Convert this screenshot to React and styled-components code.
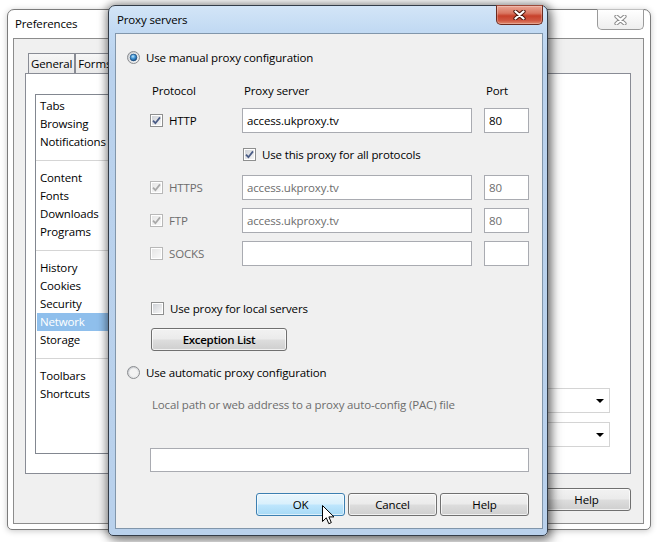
import React from "react";
import styled, { createGlobalStyle, css } from "styled-components";

const GlobalStyle = createGlobalStyle`
  html, body { margin: 0; padding: 0; background: #ffffff; }
  body {
    font-family: "Open Sans", "Noto Sans", "DejaVu Sans", sans-serif;
    font-size: 11.5px;
    letter-spacing: -0.15px;
    color: #000;
  }
  *, *::before, *::after { box-sizing: border-box; }
`;

const Desktop = styled.div`
  position: relative;
  width: 657px;
  height: 542px;
  overflow: hidden;
  background: #ffffff;
`;

/* ---------- background Preferences window ---------- */

const PrefWindow = styled.div`
  position: absolute;
  left: 7px;
  top: 9px;
  width: 644px;
  height: 521px;
  display: flex;
  flex-direction: column;
  padding: 0 6px 6px 5px;
  background: #ffffff;
  border: 1px solid #7b7b7b;
  border-radius: 7px 7px 5px 5px;
  box-shadow: 0 1px 6px rgba(0, 0, 0, 0.22);
`;

const TitleBar = styled.div`
  height: ${(p) => p.$h}px;
  display: flex;
  align-items: flex-start;
  justify-content: space-between;
  flex: none;
`;

const TitleText = styled.span`
  line-height: ${(p) => p.$h}px;
  padding-left: ${(p) => p.$pl}px;
  font-size: 11.5px;
`;

const CaptionClose = styled.div`
  width: 47px;
  height: ${(p) => p.$h}px;
  margin-top: -1px;
  display: flex;
  align-items: center;
  justify-content: center;
  border-radius: 0 0 5px 5px;
  ${(p) =>
    p.$active
      ? css`
          border: 1px solid #6b2a1e;
          border-top-color: #9b4a3a;
          background: linear-gradient(
            to bottom,
            #e9a593 0%,
            #d97661 40%,
            #c7412b 55%,
            #cf5640 80%,
            #e08a6f 100%
          );
          box-shadow: inset 0 0 0 1px rgba(255, 255, 255, 0.25);
        `
      : css`
          border: 1px solid #9a9a9a;
          border-top-color: #c0c0c0;
          background: linear-gradient(to bottom, #ffffff, #eeeeee);
        `}
`;

const PrefBody = styled.div`
  flex: 1;
  display: flex;
  flex-direction: column;
  background: #f0f0f0;
  border: 1px solid #8c8c8c;
  padding: 14px 12px 12px 11px;
`;

const TabStrip = styled.div`
  display: flex;
  height: 20px;
  margin-left: 3px;
`;

const Tab = styled.div`
  height: 20px;
  padding: 0 2px 0 2px;
  line-height: 19px;
  border: 1px solid #898c95;
  border-bottom: none;
  background: linear-gradient(to bottom, #f7f7f7, #e9e9e9);
  white-space: nowrap;
`;

const TabPanel = styled.div`
  height: 401px;
  display: flex;
  background: #ffffff;
  border: 1px solid #898c95;
  padding: 20px 20px 19px 9px;
`;

const ListBox = styled.div`
  width: 150px;
  display: flex;
  flex-direction: column;
  padding-top: 2px;
  background: #ffffff;
  border: 1px solid #828790;
`;

const ListItem = styled.div`
  height: 18px;
  line-height: 18px;
  margin: 0 1px;
  padding-left: 3px;
  ${(p) =>
    p.$selected &&
    css`
      background: #8fbfec;
      color: #ffffff;
    `}
`;

const ListSeparator = styled.div`
  height: 18px;
  display: flex;
  align-items: center;
  &::after {
    content: "";
    flex: 1;
    height: 1px;
    background: #d5d5d5;
  }
`;

const RightPane = styled.div`
  flex: 1;
  display: flex;
  flex-direction: column;
  justify-content: flex-end;
  align-items: flex-end;
  gap: 9px;
  padding-bottom: 7px;
`;

const DropDown = styled.div`
  width: 230px;
  height: 25px;
  display: flex;
  align-items: center;
  justify-content: flex-end;
  padding-right: 5px;
  background: #ffffff;
  border: 1px solid #d4d4d4;
  &::after {
    content: "";
    border-left: 4px solid transparent;
    border-right: 4px solid transparent;
    border-top: 4px solid #000;
  }
`;

const ButtonRow = styled.div`
  display: flex;
  justify-content: ${(p) => (p.$start ? "flex-start" : "flex-end")};
  gap: ${(p) => p.$gap}px;
  margin-top: ${(p) => p.$mt}px;
`;

const Button = styled.div`
  width: ${(p) => p.$w}px;
  height: 23px;
  display: flex;
  align-items: center;
  justify-content: center;
  margin-left: ${(p) => p.$ml || 0}px;
  font-weight: ${(p) => (p.$bold ? 600 : 400)};
  letter-spacing: ${(p) => (p.$bold ? "-0.3px" : "-0.15px")};
  border-radius: 3px;
  ${(p) =>
    p.$hot
      ? css`
          border: 1px solid #3c7fb1;
          background: linear-gradient(
            to bottom,
            #eaf6fd 0%,
            #d9f0fc 48%,
            #bee6fd 52%,
            #a7d9f5 100%
          );
          box-shadow: inset 0 0 0 1px rgba(255, 255, 255, 0.6);
        `
      : css`
          border: 1px solid #707070;
          background: linear-gradient(
            to bottom,
            #f2f2f2 0%,
            #ebebeb 48%,
            #dddddd 52%,
            #cfcfcf 100%
          );
          box-shadow: inset 0 0 0 1px rgba(255, 255, 255, 0.7);
        `}
`;

/* ---------- Proxy servers dialog ---------- */

const Dialog = styled.div`
  position: absolute;
  left: 108px;
  top: 5px;
  width: 440px;
  height: 531px;
  display: flex;
  flex-direction: column;
  padding: 0 4px 6px 6px;
  border: 1px solid #333c48;
  border-radius: 7px 7px 5px 5px;
  background: linear-gradient(
    to bottom,
    #d3e5f7 0px,
    #c2daf3 24px,
    #bad2ed 60px,
    #b9d1ec 100%
  );
  box-shadow: 0 0 9px 2px rgba(0, 0, 0, 0.38), 4px 5px 12px rgba(0, 0, 0, 0.35);
`;

const DialogBody = styled.div`
  flex: 1;
  display: flex;
  flex-direction: column;
  background: #f0f0f0;
  border: 1px solid #8196ab;
  padding: 0 13px 10px 11px;
`;

const OptionRow = styled.label`
  display: flex;
  align-items: center;
  gap: 6px;
  height: 16px;
  margin-top: ${(p) => p.$mt}px;
  margin-left: ${(p) => p.$ml || 0}px;
  color: ${(p) => (p.$disabled ? "#6d6d6d" : "#000")};
  white-space: nowrap;
`;

const TableRow = styled.div`
  display: grid;
  grid-template-columns: 80px 230px 45px;
  column-gap: 12px;
  align-items: center;
  height: ${(p) => p.$h}px;
  margin-top: ${(p) => p.$mt}px;
  margin-left: 23px;
`;

const HeadCell = styled.span`
  padding-left: 2px;
`;

const SpanCell = styled.div`
  grid-column: 2 / span 2;
`;

const TextBox = styled.div`
  height: ${(p) => p.$h || 25}px;
  width: ${(p) => (p.$w ? `${p.$w}px` : "auto")};
  margin-top: ${(p) => p.$mt || 0}px;
  margin-left: ${(p) => p.$ml || 0}px;
  display: flex;
  align-items: center;
  padding-left: 4px;
  background: #ffffff;
  border: 1px solid #a9abb1;
  color: ${(p) => (p.$disabled ? "#6d6d6d" : "#000")};
  white-space: nowrap;
`;

const Hint = styled.div`
  height: 16px;
  line-height: 16px;
  margin-top: ${(p) => p.$mt}px;
  margin-left: ${(p) => p.$ml}px;
  color: #6d6d6d;
  white-space: nowrap;
`;

const Cursor = styled.svg`
  position: absolute;
  left: 322px;
  top: 505px;
`;

/* ---------- drawn glyphs ---------- */

const CloseGlyph = ({ outline, fill }) => (
  <svg width="13" height="10" viewBox="0 0 13 10">
    <path
      d="M2.5 1.5 L10.5 8.5 M10.5 1.5 L2.5 8.5"
      stroke={outline}
      strokeWidth="4.2"
      strokeLinecap="round"
      fill="none"
    />
    <path
      d="M2.5 1.5 L10.5 8.5 M10.5 1.5 L2.5 8.5"
      stroke={fill}
      strokeWidth="2.3"
      strokeLinecap="round"
      fill="none"
    />
  </svg>
);

const CheckBox = ({ checked, disabled }) => (
  <svg width="13" height="13" viewBox="0 0 13 13" style={{ flex: "none" }}>
    <defs>
      <linearGradient id="cbIn" x1="0" y1="0" x2="1" y2="1">
        <stop offset="0" stopColor="#cfd2d7" />
        <stop offset="1" stopColor="#f6f6f6" />
      </linearGradient>
      <linearGradient id="cbInDis" x1="0" y1="0" x2="1" y2="1">
        <stop offset="0" stopColor="#e6e6e6" />
        <stop offset="1" stopColor="#f8f8f8" />
      </linearGradient>
    </defs>
    <rect
      x="0.5"
      y="0.5"
      width="12"
      height="12"
      fill="#ffffff"
      stroke={disabled ? "#b8b8b8" : "#8e8f8f"}
    />
    <rect
      x="2"
      y="2"
      width="9"
      height="9"
      fill={disabled ? "url(#cbInDis)" : "url(#cbIn)"}
    />
    {checked && (
      <path
        d="M3 6.6 L5.4 9.2 L10 3.4"
        fill="none"
        stroke={disabled ? "#a9a9a9" : "#4a5c86"}
        strokeWidth="1.8"
      />
    )}
  </svg>
);

const Radio = ({ checked }) => (
  <svg width="13" height="13" viewBox="0 0 13 13" style={{ flex: "none" }}>
    <defs>
      <linearGradient id="rdRing" x1="0" y1="0" x2="1" y2="1">
        <stop offset="0" stopColor="#c5c8cd" />
        <stop offset="1" stopColor="#f7f7f7" />
      </linearGradient>
      <radialGradient id="rdDot" cx="0.42" cy="0.35" r="0.7">
        <stop offset="0" stopColor="#bfe6fc" />
        <stop offset="0.45" stopColor="#3f95d6" />
        <stop offset="1" stopColor="#0f3f76" />
      </radialGradient>
    </defs>
    <circle cx="6.5" cy="6.5" r="6" fill="url(#rdRing)" stroke="#8b8d90" />
    <circle cx="6.5" cy="6.5" r="4.2" fill="#f3f3f3" />
    {checked && (
      <circle
        cx="6.5"
        cy="6.5"
        r="3.4"
        fill="url(#rdDot)"
        stroke="#1d4d7c"
        strokeWidth="0.7"
      />
    )}
  </svg>
);

const ROWS = [
  { name: "HTTPS", host: "access.ukproxy.tv", port: "80", on: true },
  { name: "FTP", host: "access.ukproxy.tv", port: "80", on: true },
  { name: "SOCKS", host: "", port: "", on: false },
];

const LIST = [
  ["Tabs", "Browsing", "Notifications"],
  ["Content", "Fonts", "Downloads", "Programs"],
  ["History", "Cookies", "Security", "Network", "Storage"],
  ["Toolbars", "Shortcuts"],
];

export default function App() {
  return (
    <>
      <GlobalStyle />
      <Desktop>
        <PrefWindow>
          <TitleBar $h={28}>
            <TitleText $h={28} $pl={2}>
              Preferences
            </TitleText>
            <CaptionClose $h={21}>
              <CloseGlyph outline="#8a8a8a" fill="#ffffff" />
            </CaptionClose>
          </TitleBar>
          <PrefBody>
            <TabStrip>
              <Tab>General</Tab>
              <Tab>Forms</Tab>
            </TabStrip>
            <TabPanel>
              <ListBox>
                {LIST.map((group, gi) => (
                  <React.Fragment key={gi}>
                    {gi > 0 && <ListSeparator />}
                    {group.map((item) => (
                      <ListItem key={item} $selected={item === "Network"}>
                        {item}
                      </ListItem>
                    ))}
                  </React.Fragment>
                ))}
              </ListBox>
              <RightPane>
                <DropDown />
                <DropDown />
              </RightPane>
            </TabPanel>
            <ButtonRow $gap={6} $mt={14}>
              <Button $w={89}>Help</Button>
            </ButtonRow>
          </PrefBody>
        </PrefWindow>

        <Dialog>
          <TitleBar $h={27}>
            <TitleText $h={27} $pl={2}>
              Proxy servers
            </TitleText>
            <CaptionClose $h={20} $active>
              <CloseGlyph outline="#4a150b" fill="#ffffff" />
            </CaptionClose>
          </TitleBar>
          <DialogBody>
            <OptionRow $mt={15}>
              <Radio checked />
              Use manual proxy configuration
            </OptionRow>

            <TableRow $h={16} $mt={17}>
              <HeadCell>Protocol</HeadCell>
              <HeadCell>Proxy server</HeadCell>
              <HeadCell>Port</HeadCell>
            </TableRow>

            <TableRow $h={25} $mt={10}>
              <OptionRow $mt={0}>
                <CheckBox checked />
                HTTP
              </OptionRow>
              <TextBox>access.ukproxy.tv</TextBox>
              <TextBox>80</TextBox>
            </TableRow>

            <TableRow $h={42} $mt={0}>
              <SpanCell>
                <OptionRow $mt={0} $ml={1}>
                  <CheckBox checked />
                  Use this proxy for all protocols
                </OptionRow>
              </SpanCell>
            </TableRow>

            {ROWS.map((r, i) => (
              <TableRow key={r.name} $h={25} $mt={i === 0 ? 0 : 8}>
                <OptionRow $mt={0} $disabled>
                  <CheckBox checked={r.on} disabled />
                  {r.name}
                </OptionRow>
                <TextBox $disabled>{r.host}</TextBox>
                <TextBox $disabled>{r.port}</TextBox>
              </TableRow>
            ))}

            <OptionRow $mt={34} $ml={24}>
              <CheckBox />
              Use proxy for local servers
            </OptionRow>

            <ButtonRow $gap={0} $mt={12} $start>
              <Button $w={136} $ml={24} $bold>
                Exception List
              </Button>
            </ButtonRow>

            <OptionRow $mt={13}>
              <Radio />
              Use automatic proxy configuration
            </OptionRow>

            <Hint $mt={17} $ml={25}>
              Local path or web address to a proxy auto-config (PAC) file
            </Hint>

            <TextBox $mt={35} $ml={23} $w={379} $h={24} />

            <ButtonRow $gap={3} $mt={21}>
              <Button $w={89} $hot>
                OK
              </Button>
              <Button $w={89}>Cancel</Button>
              <Button $w={89}>Help</Button>
            </ButtonRow>
          </DialogBody>
        </Dialog>

        <Cursor width="13" height="20" viewBox="0 0 13 20">
          <path
            d="M0.5 0.5 L0.5 16.5 L4.3 12.8 L6.8 18.7 L9.3 17.6 L6.9 11.9 L12 11.9 Z"
            fill="#ffffff"
            stroke="#000000"
            strokeWidth="1"
            strokeLinejoin="miter"
          />
        </Cursor>
      </Desktop>
    </>
  );
}
